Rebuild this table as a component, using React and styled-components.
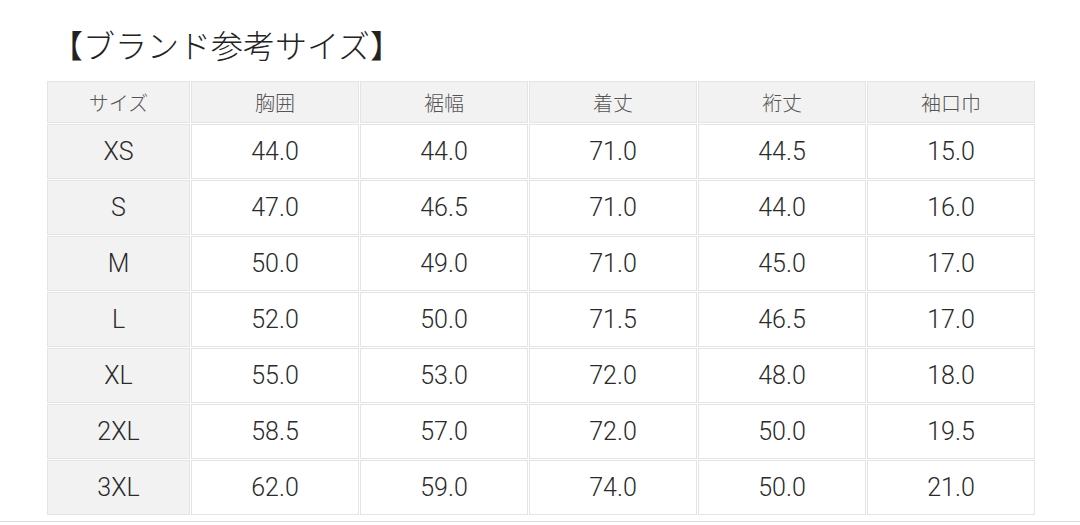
import React from "react";
import styled, { createGlobalStyle } from "styled-components";

const GlobalStyle = createGlobalStyle`
  body {
    margin: 0;
    background: #ffffff;
    font-family: Roboto, "Noto Sans CJK JP", sans-serif;
  }
`;

const columns = ["サイズ", "胸囲", "裾幅", "着丈", "裄丈", "袖口巾"];

const rows = [
  ["XS", "44.0", "44.0", "71.0", "44.5", "15.0"],
  ["S", "47.0", "46.5", "71.0", "44.0", "16.0"],
  ["M", "50.0", "49.0", "71.0", "45.0", "17.0"],
  ["L", "52.0", "50.0", "71.5", "46.5", "17.0"],
  ["XL", "55.0", "53.0", "72.0", "48.0", "18.0"],
  ["2XL", "58.5", "57.0", "72.0", "50.0", "19.5"],
  ["3XL", "62.0", "59.0", "74.0", "50.0", "21.0"],
];

export default function App() {
  return (
    <Page>
      <GlobalStyle />
      <Content>
        <Title>【ブランド参考サイズ】</Title>
        <SizeTable>
          <colgroup>
            <col style={{ width: "143px" }} />
            {columns.slice(1).map((c) => (
              <col key={c} style={{ width: "168px" }} />
            ))}
          </colgroup>
          <thead>
            <tr>
              {columns.map((c) => (
                <HeadCell key={c}>{c}</HeadCell>
              ))}
            </tr>
          </thead>
          <tbody>
            {rows.map((r) => (
              <tr key={r[0]}>
                {r.map((v, i) => (
                  <Cell key={i} $label={i === 0}>
                    {v}
                  </Cell>
                ))}
              </tr>
            ))}
          </tbody>
        </SizeTable>
      </Content>
      <Divider />
    </Page>
  );
}

const Page = styled.div`
  width: 1080px;
  height: 525px;
  display: flex;
  flex-direction: column;
`;

const Content = styled.div`
  padding: 0 0 0 46px;
`;

const Title = styled.h2`
  margin: 0;
  box-sizing: border-box;
  height: 80px;
  padding: 8px 0 0 5px;
  display: flex;
  align-items: center;
  font-family: "Noto Sans CJK JP", sans-serif;
  font-weight: 300;
  font-size: 32px;
  line-height: 40px;
  color: #222;
`;

const SizeTable = styled.table`
  border-collapse: separate;
  border-spacing: 1px;
  table-layout: fixed;
  width: 984px;
`;

const HeadCell = styled.th`
  height: 40px;
  padding: 0;
  background: #f2f2f2;
  border: 1px solid #e4e4e4;
  font-family: "Noto Sans CJK JP", sans-serif;
  font-weight: 300;
  font-size: 20px;
  color: #555;
  text-align: center;
`;

const Cell = styled.td`
  height: 53px;
  padding: 0;
  background: ${(p) => (p.$label ? "#f2f2f2" : "#ffffff")};
  border: 1px solid #e4e4e4;
  font-family: Roboto, sans-serif;
  font-weight: 300;
  font-size: 25px;
  color: #2a2a2a;
  text-align: center;
`;

const Divider = styled.div`
  margin-top: auto;
  margin-bottom: 3px;
  height: 1px;
  background: #dcdcdc;
`;
